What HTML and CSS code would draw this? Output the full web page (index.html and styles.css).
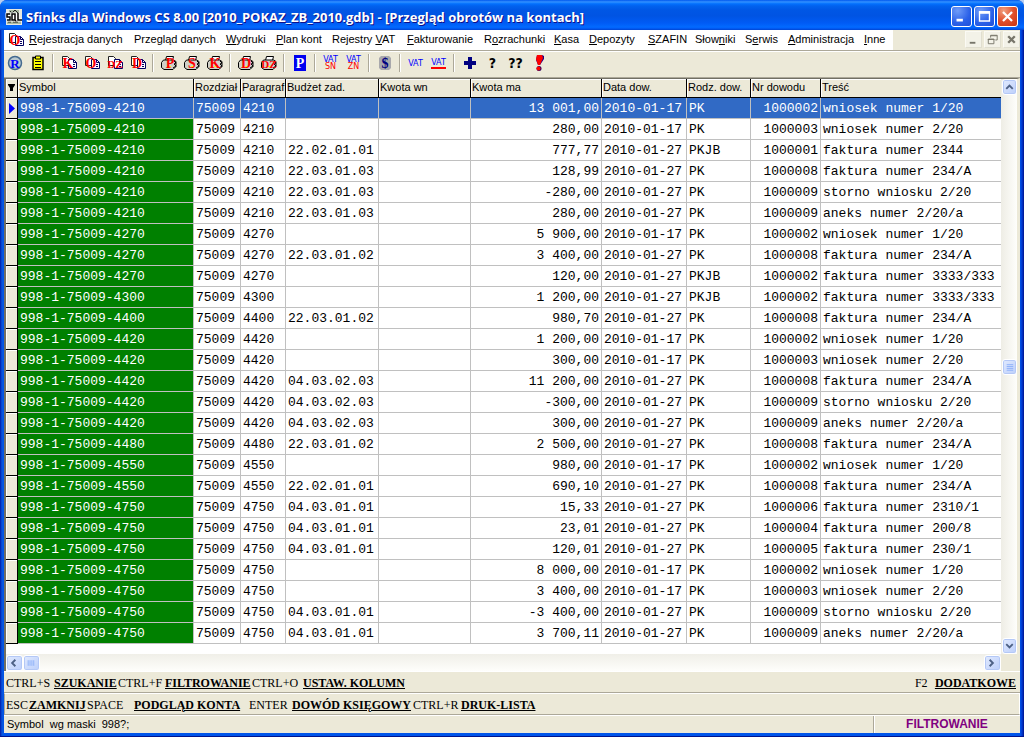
FILE: index.html
```html
<!DOCTYPE html>
<html lang="pl">
<head>
<meta charset="utf-8">
<title>Sfinks dla Windows CS 8.00</title>
<link rel="stylesheet" href="styles.css">
</head>
<body>
<svg class="defs" aria-hidden="true">
  <symbol id="docs" viewBox="0 0 16 16">
    <path d="M1.500 1.500h5l2 2v7h-7z" fill="#fff" stroke="#222"/>
    <path d="M7.500 4.500h5l3 3v6h-8z" fill="#fff" stroke="#000060"/>
    <path d="M12.500 4.500v3h3M12 9.500h2M12 11.500h2" fill="none" stroke="#000060"/>
  </symbol>
  <symbol id="printer" viewBox="0 0 16 16">
    <path d="M4.500 5.500l1-4h7l-1 4z" fill="#fff" stroke="#000"/>
    <path d="M0.500 7.500l2-2.500h10l2.500 1.500v5l-3 3h-9l-2.500-2z" fill="#d0d0c8" stroke="#000"/>
    <path d="M13 6l2 2-2 1 2 2-3 2" fill="none" stroke="#000"/>
    <path d="M7 11.500h3" stroke="#ff0"/>
  </symbol>
</svg>
<div class="window">
  <header class="titlebar">
    <svg class="app-icon" viewBox="0 0 16 16"><rect width="16" height="16" fill="#e8e8e0"/><path d="M3 1h10v6H3zM1 12h14v3H1z" fill="#a8b8a0"/><path d="M4 2l2 2 3-3 3 3M2 13h3M7 13h5" stroke="#222" fill="none"/><path d="M4 5H1v3h3v3H1M9 11H6V5h3v6l1 1M12 4v7h4" fill="none" stroke="#fff" stroke-width="3"/><path d="M4 5H1v3h3v3H1M9 11H6V5h3v6l1 1M12 4v7h4" fill="none" stroke="#000" stroke-width="1.500"/></svg>
    <h1 class="title">Sfinks dla Windows CS 8.00 [2010_POKAZ_ZB_2010.gdb] - [Przegląd obrotów na kontach]</h1>
    <div class="win-buttons">
      <button class="win-btn" aria-label="Minimalizuj"><svg viewBox="0 0 21 21"><path d="M5 14.500h7" stroke="#fff" stroke-width="3"/></svg></button>
      <button class="win-btn" aria-label="Maksymalizuj"><svg viewBox="0 0 21 21"><path d="M5 5.500h11v10H5z" fill="none" stroke="#fff" stroke-width="1.500"/><path d="M4.500 6h12" stroke="#fff" stroke-width="3"/></svg></button>
      <button class="win-btn win-close" aria-label="Zamknij"><svg viewBox="0 0 21 21"><path d="M5.500 5.500l10 10M15.500 5.500l-10 10" stroke="#fff" stroke-width="2.500"/></svg></button>
    </div>
  </header>
  <div class="menubar">
    <nav class="menu">
      <svg class="menu-icon" viewBox="0 0 16 16"><use href="#docs"/><text class="glyph" x="7" y="13">O</text></svg>
      <a href="#"><u>R</u>ejestracja danych</a><a href="#">Prze<u>g</u>ląd danych</a><a href="#"><u>W</u>ydruki</a><a href="#"><u>P</u>lan kont</a><a href="#">Rejestry <u>V</u>AT</a><a href="#"><u>F</u>akturowanie</a><a href="#">R<u>o</u>zrachunki</a><a href="#"><u>K</u>asa</a><a href="#"><u>D</u>epozyty</a><a href="#"><u>S</u>ZAFIN</a><a href="#">Słow<u>n</u>iki</a><a href="#">S<u>e</u>rwis</a><a href="#"><u>A</u>dministracja</a><a href="#"><u>I</u>nne</a>
    </nav>
    <div class="mdi">
      <button class="mdi-btn" aria-label="Minimalizuj okno"><svg viewBox="0 0 16 16"><path d="M4 11.500h6" stroke="#77756a" stroke-width="2"/></svg></button>
      <button class="mdi-btn" aria-label="Przywróć okno"><svg viewBox="0 0 16 16"><path d="M6 6V3.500h7v5h-2M6 4h7M3.500 7.500h6v5h-6zM3 8h7" fill="none" stroke="#77756a"/></svg></button>
      <button class="mdi-btn" aria-label="Zamknij okno"><svg viewBox="0 0 16 16"><path d="M4.500 4.500l7 7M11.500 4.500l-7 7" stroke="#77756a" stroke-width="2.500"/></svg></button>
    </div>
  </div>
  <div class="toolbar" role="toolbar">
    <button class="tool edge" aria-label="Rejestr"><svg viewBox="0 0 16 16"><circle cx="8" cy="8" r="6.500" fill="#b8c8d0" stroke="#446a90" stroke-width="1.500"/><text class="glyph blue" x="8" y="13">R</text></svg></button>
    <button class="tool" aria-label="Schowek"><svg viewBox="0 0 16 16"><path d="M3 2.500h10v12H3z" fill="#ff0" stroke="#000" stroke-width="1.500"/><path d="M5.500 1h5v3h-5z" fill="#ff0" stroke="#000"/><path d="M5 6.500h6M5 9.500h6M5 12.500h6" stroke="#000"/></svg></button>
    <span class="sep"></span>
    <button class="tool"><svg viewBox="0 0 16 16"><use href="#docs"/><text class="glyph" x="7" y="13">K</text></svg></button>
    <button class="tool"><svg viewBox="0 0 16 16"><use href="#docs"/><text class="glyph" x="7" y="13">O</text></svg></button>
    <button class="tool"><svg viewBox="0 0 16 16"><use href="#docs"/><text class="glyph pair" x="8" y="13">DZ</text></svg></button>
    <button class="tool"><svg viewBox="0 0 16 16"><use href="#docs"/><text class="glyph" x="7" y="13">D</text></svg></button>
    <span class="sep"></span>
    <button class="tool"><svg viewBox="0 0 16 16"><use href="#printer"/><text class="glyph" x="9" y="13">P</text></svg></button>
    <button class="tool"><svg viewBox="0 0 16 16"><use href="#printer"/><text class="glyph" x="8" y="13">S</text></svg></button>
    <button class="tool"><svg viewBox="0 0 16 16"><use href="#printer"/><text class="glyph" x="8" y="13">K</text></svg></button>
    <span class="sep"></span>
    <button class="tool"><svg viewBox="0 0 16 16"><use href="#printer"/><text class="glyph" x="8" y="13">D</text></svg></button>
    <button class="tool"><svg viewBox="0 0 16 16"><use href="#printer"/><text class="glyph pair" x="8" y="13">DZ</text></svg></button>
    <span class="sep"></span>
    <button class="tool"><svg viewBox="0 0 16 16"><path d="M2 0h12v16H2z" fill="#0000f0"/><text class="glyph white" x="8" y="13">P</text></svg></button>
    <span class="sep"></span>
    <button class="tool vat"><span>VAT</span><span class="sub">SN</span></button>
    <button class="tool vat"><span>VAT</span><span class="sub">ZN</span></button>
    <span class="sep"></span>
    <button class="tool"><svg viewBox="0 0 16 16"><path d="M4 1h8l2 2v10l-2 2H4l-2-2V3z" fill="#a8a8ac"/><text class="glyph dollar" x="8" y="13">$</text></svg></button>
    <span class="sep"></span>
    <button class="tool vat"><span>VAT</span></button>
    <button class="tool vat"><span class="lined">VAT</span></button>
    <span class="sep"></span>
    <button class="tool" aria-label="Dodaj"><svg viewBox="0 0 16 16"><path d="M8 2v12M2 8h12" stroke="#000080" stroke-width="4"/></svg></button>
    <button class="tool ask">?</button>
    <button class="tool ask">??</button>
    <button class="tool" aria-label="Uwaga"><svg viewBox="0 0 16 16"><path d="M6 0h5l2 1v3l-4 6H7L5 5z" fill="#200080"/><path d="M6 0h5l1 3-3 7H7L5 4z" fill="#f00"/><circle cx="8" cy="13.500" r="2.500" fill="#300060"/><circle cx="7.500" cy="13.500" r="2" fill="#f00"/></svg></button>
  </div>
  <main class="grid">
    <div class="sheet">
      <table class="ledger">
        <colgroup><col class="c-mark"><col class="c-symbol"><col class="c-rozdzial"><col class="c-paragraf"><col class="c-budzet"><col class="c-wn"><col class="c-ma"><col class="c-data"><col class="c-rodz"><col class="c-nr"><col></colgroup>
        <thead><tr><th aria-label="Znacznik"><svg class="mark" viewBox="0 0 9 9"><path d="M1 1h7v1L6 5v3H3V5L1 2z"/></svg></th><th>Symbol</th><th>Rozdział</th><th>Paragraf</th><th>Budżet zad.</th><th>Kwota wn</th><th>Kwota ma</th><th>Data dow.</th><th>Rodz. dow.</th><th>Nr dowodu</th><th>Treść</th></tr></thead>
        <tbody id="rows"></tbody>
      </table>
    </div>
    <div class="scroll vertical">
      <button class="scroll-btn" aria-label="W górę"><svg viewBox="0 0 14 14"><path d="M3.500 9L7 5.500 10.500 9"/></svg></button>
      <span class="before"></span>
      <span class="thumb"><svg viewBox="0 0 14 14"><path d="M4 4.500h7M4 6.500h7M4 8.500h7M4 10.500h7"/></svg></span>
      <span class="after"></span>
      <button class="scroll-btn" aria-label="W dół"><svg viewBox="0 0 14 14"><path d="M3.500 5L7 8.500 10.500 5"/></svg></button>
    </div>
    <div class="scroll horizontal">
      <button class="scroll-btn" aria-label="W lewo"><svg viewBox="0 0 14 14"><path d="M9 3.500L5.500 7 9 10.500"/></svg></button>
      <span class="thumb"><svg viewBox="0 0 14 14"><path d="M4.500 4v6M6.500 4v6M8.500 4v6M10.500 4v6"/></svg></span>
      <span class="after"></span>
      <button class="scroll-btn" aria-label="W prawo"><svg viewBox="0 0 14 14"><path d="M5 3.500L8.500 7 5 10.500"/></svg></button>
    </div>
  </main>
  <div class="keys">
    <div class="keyset first"><span>CTRL+S</span><a href="#">SZUKANIE</a><span>CTRL+F</span><a href="#">FILTROWANIE</a><span>CTRL+O</span><a href="#">USTAW. KOLUMN</a></div>
    <div class="keyset extra"><span>F2</span><a href="#">DODATKOWE</a></div>
  </div>
  <div class="keys sunken">
    <div class="keyset second"><span>ESC</span><a href="#">ZAMKNIJ</a><span>SPACE</span><a href="#">PODGLĄD KONTA</a><span>ENTER</span><a href="#">DOWÓD KSIĘGOWY</a><span>CTRL+R</span><a href="#">DRUK-LISTA</a></div>
  </div>
  <footer class="status">
    <span class="mask">Symbol&nbsp; wg maski&nbsp; 998?;</span>
    <strong class="mode">FILTROWANIE</strong>
  </footer>
</div>
<script src="rows.js"></script>
</body>
</html>
```
FILE: styles.css
```css
* { box-sizing: border-box; }
body { margin: 0; background: #b8cdf0; font-family: "Liberation Sans", Arial, sans-serif; font-size: 11px; color: #000; }
button { padding: 0; border: 0; background: none; font: inherit; }
a { color: inherit; }
svg { display: block; overflow: visible; }
.defs { position: absolute; width: 0; height: 0; }

.window { display: flex; flex-direction: column; min-height: 100vh; padding: 0 4px 3px; background: linear-gradient(90deg, #0019a8, #0855dd 2px, #0055ea 4px, #0055ea calc(100% - 4px), #0038d0 calc(100% - 2px), #00138c); border-bottom: 1px solid #00138c; border-radius: 7px 7px 0 0; overflow: hidden; }
.titlebar { display: flex; align-items: center; height: 30px; margin: 0 -4px; padding: 3px 6px 0; background: linear-gradient(#0058ee, #3593ff 2px, #127dff 3px, #036ffc 4px, #0262ee 6px, #0057e5 10px, #0054e3 16px, #005bf5 23px, #026afe 27px, #0061fc 28px, #0144d0); }
.app-icon { width: 16px; height: 16px; }
.title { flex: 1; margin: 0; padding-left: 4px; font: 700 13px/20px "Open Sans", sans-serif; color: #fff; text-shadow: 1px 1px #0f1089; white-space: nowrap; }
.win-buttons { display: flex; gap: 2px; }
.win-btn { width: 21px; height: 21px; border: 1px solid #fff; border-radius: 3px; background: radial-gradient(circle at 30% 20%, #6f9cf8, #2a60e8 60%, #1f4fd8); }
.win-btn svg { width: 19px; height: 19px; }
.win-close { background: radial-gradient(circle at 30% 20%, #f0a080, #e2502c 50%, #c83412); }

.menubar { display: flex; justify-content: space-between; height: 21px; background: #ece9d8; border-bottom: 1px solid #aca899; }
.menu { display: grid; grid-template-columns: 25px 105px 92px 50px 56px 75px 77px 70px 35px 59px 47px 50px 43px 76px 29px; align-items: start; background: #fff; line-height: 19px; }
.menu a { text-decoration: none; white-space: nowrap; }
.menu-icon { width: 16px; height: 16px; margin: 2px 0 0 4px; }
.mdi { display: flex; gap: 2px; padding-top: 1px; }
.mdi-btn { width: 17px; height: 17px; background: #f3f2e8; border: 1px solid #fbfaf4; border-right-color: #e0decf; border-bottom-color: #e0decf; }
.mdi-btn svg { width: 15px; height: 15px; }

.toolbar { display: flex; align-items: center; height: 27px; padding-bottom: 3px; background: #ece9d8; border-top: 1px solid #fff; border-bottom: 1px solid #aca899; }
.tool { flex: none; width: 23px; height: 22px; display: flex; flex-direction: column; align-items: center; justify-content: center; }
.edge { width: 22px; }
.tool svg { width: 16px; height: 16px; }
.sep { width: 2px; height: 18px; margin: 0 3px; border-left: 1px solid #aca899; border-right: 1px solid #fff; }
.glyph { font: bold 14px "Liberation Serif", serif; fill: #f00; text-anchor: middle; }
.pair { font-size: 11px; }
.blue { font-size: 13px; fill: #00f; }
.white { fill: #fff; }
.dollar { fill: #000080; }
.vat { font: 8px/7px "DejaVu Sans", sans-serif; color: #00f; }
.sub { color: #f00; }
.lined { border-bottom: 2px solid #f00; line-height: 9px; }
.ask { font: bold 14px "DejaVu Sans Condensed", "DejaVu Sans", sans-serif; }

.grid { flex: 1; display: grid; grid-template-columns: minmax(0, 1fr) 16px; grid-template-rows: 1fr 17px; background: #fff; border: solid #716f64; border-width: 1px 0 0 2px; border-right: 3px solid #ece9d8; }
.sheet { padding-bottom: 10px; overflow: hidden; }
.ledger { width: 100%; table-layout: fixed; border-collapse: separate; border-spacing: 0; }
.c-mark { width: 12px; } .c-symbol { width: 176px; } .c-rozdzial { width: 47px; } .c-paragraf { width: 45px; } .c-budzet { width: 93px; } .c-wn { width: 92px; } .c-ma { width: 131px; } .c-data { width: 85px; } .c-rodz { width: 64px; } .c-nr { width: 70px; }
.ledger th { height: 19px; padding: 0 0 2px 1px; background: #ece9d8; border: solid #000; border-width: 0 1px 1px 0; box-shadow: inset 1px 1px #fff; font-weight: normal; text-align: left; white-space: nowrap; overflow: hidden; line-height: 16px; }
.ledger th:last-child { border-right: 0; }
.ledger td { height: 21px; padding: 1px 2px 0; border: solid #c0c0c0; border-width: 0 1px 1px 0; font: 13px/19px "Liberation Mono", monospace; white-space: pre; overflow: hidden; }
.ledger td:last-child { border-right: 0; }
.ledger td.mark-cell { padding: 0 0 0 1px; background: #ece9d8; border-color: #000; box-shadow: inset 1px 1px #fff; }
.ledger td.symbol { background: #008000; color: #fff; }
.ledger .num { text-align: right; }
.ledger .selected td:not(.mark-cell) { background: #316ac5; color: #fff; }
.mark { width: 9px; height: 9px; }
.arrow { width: 6px; height: 11px; margin-left: 2px; fill: #00f; }

.scroll { display: flex; background: #f4f3ee; }
.vertical { flex-direction: column; padding-left: 1px; background: linear-gradient(90deg, #eeede5, #fefefb); }
.horizontal { padding-top: 1px; background: linear-gradient(#f0efe8, #fefefb); }
.scroll-btn, .thumb { flex: none; width: 15px; height: 16px; background: linear-gradient(135deg, #e1eafe, #bccffb); border: 1px solid #fff; border-radius: 3px; box-shadow: inset 0 0 0 1px #b4c8f6; }
.scroll svg { width: 13px; height: 14px; fill: none; stroke: #4d6185; stroke-width: 2; }
.scroll .thumb svg { stroke: #8cb0f8; stroke-width: 1; }
.horizontal .scroll-btn, .horizontal .thumb { width: 17px; }
.horizontal .scroll svg { width: 15px; }
.horizontal .after { flex: 1; }
.vertical .before { flex: 264; }
.vertical .after { flex: 264; }
.grid::after { content: ""; background: #ece9d8; }

.keys { display: flex; justify-content: space-between; align-items: center; height: 22px; padding: 2px 4px 0 2px; background: #ece9d8; border-top: 1px solid #fff; border-bottom: 1px solid #aca899; font: 12px/18px "Liberation Serif", "Times New Roman", serif; white-space: nowrap; }
.keys a { font-weight: bold; }
.keyset { display: grid; }
.first { grid-template-columns: 48px 64px 47px 87px 51px auto; }
.extra { grid-template-columns: 20px auto; }
.second { grid-template-columns: 23px 58px 47px 115px 43px 121px 48px auto; }
.sunken { padding-left: 1px; border-left: 1px solid #aca899; border-right: 1px solid #fff; }
.status { display: flex; justify-content: space-between; height: 18px; background: #ece9d8; border-top: 1px solid #fff; line-height: 17px; }
.mask { padding-left: 3px; }
.mode { width: 147px; border-left: 1px solid #aca899; box-shadow: inset 1px 0 #fff; font-size: 12px; text-align: center; color: #800080; }
```
FILE: rows.js
```javascript
const entries = `4210||13 001,00|17|PK|2|wniosek numer 1/20
4210||280,00|17|PK|3|wniosek numer 2/20
4210|22.02.01.01|777,77|27|PKJB|1|faktura numer 2344
4210|22.03.01.03|128,99|27|PK|8|faktura numer 234/A
4210|22.03.01.03|-280,00|27|PK|9|storno wniosku 2/20
4210|22.03.01.03|280,00|27|PK|9|aneks numer 2/20/a
4270||5 900,00|17|PK|2|wniosek numer 1/20
4270|22.03.01.02|3 400,00|27|PK|8|faktura numer 234/A
4270||120,00|27|PKJB|2|faktura numer 3333/333
4300||1 200,00|27|PKJB|2|faktura numer 3333/333
4400|22.03.01.02|980,70|27|PK|8|faktura numer 234/A
4420||1 200,00|17|PK|2|wniosek numer 1/20
4420||300,00|17|PK|3|wniosek numer 2/20
4420|04.03.02.03|11 200,00|27|PK|8|faktura numer 234/A
4420|04.03.02.03|-300,00|27|PK|9|storno wniosku 2/20
4420|04.03.02.03|300,00|27|PK|9|aneks numer 2/20/a
4480|22.03.01.02|2 500,00|27|PK|8|faktura numer 234/A
4550||980,00|17|PK|2|wniosek numer 1/20
4550|22.02.01.01|690,10|27|PK|8|faktura numer 234/A
4750|04.03.01.01|15,33|27|PK|6|faktura numer 2310/1
4750|04.03.01.01|23,01|27|PK|4|faktura numer 200/8
4750|04.03.01.01|120,01|27|PK|5|faktura numer 230/1
4750||8 000,00|17|PK|2|wniosek numer 1/20
4750||3 400,00|17|PK|3|wniosek numer 2/20
4750|04.03.01.01|-3 400,00|27|PK|9|storno wniosku 2/20
4750|04.03.01.01|3 700,11|27|PK|9|aneks numer 2/20/a`.split("\n");

document.getElementById("rows").innerHTML = entries.map((line, i) => {
  const [par, task, amount, day, kind, no, text] = line.split("|");
  const arrow = i === 0 ? '<svg class="arrow" viewBox="0 0 6 11"><path d="M0 0l6 5.500L0 11z"/></svg>' : "";
  return `<tr class="${i === 0 ? "selected" : ""}"><td class="mark-cell">${arrow}</td><td class="symbol">998-1-75009-${par}</td><td>75009</td><td>${par}</td><td>${task}</td><td></td><td class="num">${amount}</td><td>2010-01-${day}</td><td>${kind}</td><td class="num">100000${no}</td><td>${text}</td></tr>`;
}).join("");
```
